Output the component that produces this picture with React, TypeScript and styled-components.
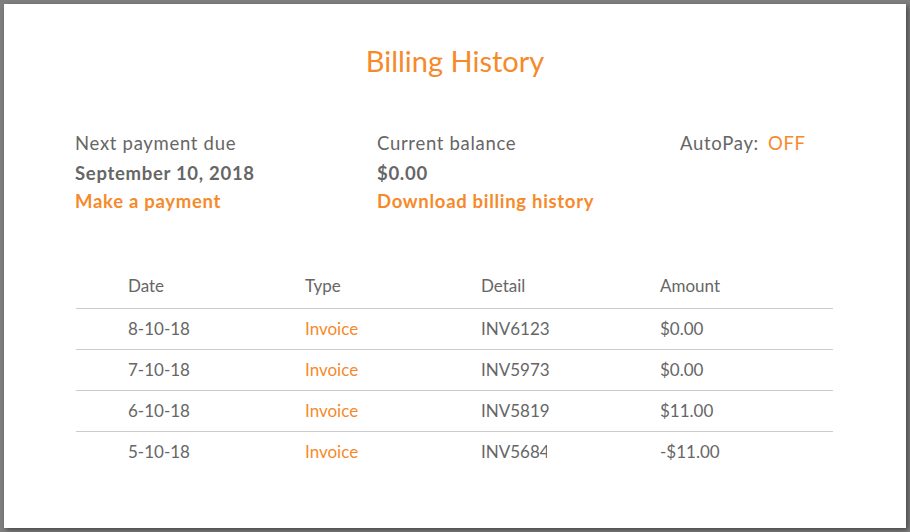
import React from "react";
import styled, { createGlobalStyle } from "styled-components";

const GlobalStyle = createGlobalStyle`
  html, body {
    margin: 0;
    padding: 0;
    background: #7f7f7f;
  }
  body {
    font-family: Lato, "Open Sans", Arial, sans-serif;
    -webkit-font-smoothing: antialiased;
  }
`;

const orange = "#f68a2b";
const grey = "#666666";

const Backdrop = styled.div`
  width: 910px;
  height: 532px;
  padding: 4px;
  box-sizing: border-box;
  background: #7f7f7f;
  overflow: hidden;
`;

const Modal = styled.div`
  width: 902px;
  height: 524px;
  background: #fff;
  box-shadow: 2px 2px 5px rgba(0, 0, 0, 0.45);
  box-sizing: border-box;
  padding-top: 39px;
`;

const Title = styled.h1`
  margin: 0;
  text-align: center;
  font-size: 29px;
  font-weight: 400;
  line-height: 36px;
  color: ${orange};
`;

const Summary = styled.div`
  display: grid;
  grid-template-columns: 302px 303px auto;
  padding-left: 71px;
  margin-top: 53px;
  font-size: 18.5px;
  line-height: 22px;
  letter-spacing: 0.7px;
`;

const Block = styled.div`
  display: flex;
  flex-direction: column;
`;

const Label = styled.div`
  font-weight: 400;
  color: ${grey};
  height: 30px;
`;

const Value = styled.div`
  font-weight: 700;
  color: ${grey};
  height: 28px;
`;

const Action = styled.a`
  font-weight: 700;
  color: ${orange};
  text-decoration: none;
  cursor: pointer;
`;

const Status = styled.span<{ $on?: boolean }>`
  margin-left: 9px;
  color: ${(p) => (p.$on ? "#4a9b3d" : orange)};
`;

const Table = styled.div`
  margin: 56px 73px 0 72px;
`;

const Row = styled.div<{ $head?: boolean; $first?: boolean }>`
  display: grid;
  grid-template-columns: 177px 176px 179px 1fr;
  padding-left: 52px;
  padding-bottom: ${(p) => (p.$head ? "4px" : "0")};
  height: ${(p) => (p.$head ? "41px" : "40px")};
  box-sizing: ${(p) => (p.$head ? "border-box" : "content-box")};
  align-items: center;
  border-top: ${(p) => (p.$head || p.$first ? "none" : "1px solid #cccccc")};
  border-bottom: ${(p) => (p.$head ? "1px solid #cccccc" : "none")};
`;

const Cell = styled.div<{ $link?: boolean; $clip?: boolean }>`
  font-size: 17px;
  line-height: 22px;
  font-weight: 400;
  color: ${(p) => (p.$link ? orange : grey)};
  white-space: nowrap;
  overflow: ${(p) => (p.$clip ? "hidden" : "visible")};
  max-width: ${(p) => (p.$clip ? "66px" : "none")};
  cursor: ${(p) => (p.$link ? "pointer" : "default")};
`;

const rows = [
  { date: "8-10-18", type: "Invoice", detail: "INV6123", amount: "$0.00" },
  { date: "7-10-18", type: "Invoice", detail: "INV5973", amount: "$0.00" },
  { date: "6-10-18", type: "Invoice", detail: "INV5819", amount: "$11.00" },
  { date: "5-10-18", type: "Invoice", detail: "INV5684", amount: "-$11.00", clipped: true },
];

const App: React.FC = () => {
  return (
    <>
      <GlobalStyle />
      <Backdrop>
        <Modal>
          <Title>Billing History</Title>
          <Summary>
            <Block>
              <Label>Next payment due</Label>
              <Value>September 10, 2018</Value>
              <Action>Make a payment</Action>
            </Block>
            <Block>
              <Label>Current balance</Label>
              <Value>$0.00</Value>
              <Action>Download billing history</Action>
            </Block>
            <Block>
              <Label>
                AutoPay:<Status>OFF</Status>
              </Label>
            </Block>
          </Summary>
          <Table>
            <Row $head>
              <Cell>Date</Cell>
              <Cell>Type</Cell>
              <Cell>Detail</Cell>
              <Cell>Amount</Cell>
            </Row>
            {rows.map((r, i) => (
              <Row key={i} $first={i === 0}>
                <Cell>{r.date}</Cell>
                <Cell $link>{r.type}</Cell>
                <Cell $clip={r.clipped}>{r.detail}</Cell>
                <Cell>{r.amount}</Cell>
              </Row>
            ))}
          </Table>
        </Modal>
      </Backdrop>
    </>
  );
};

export default App;
